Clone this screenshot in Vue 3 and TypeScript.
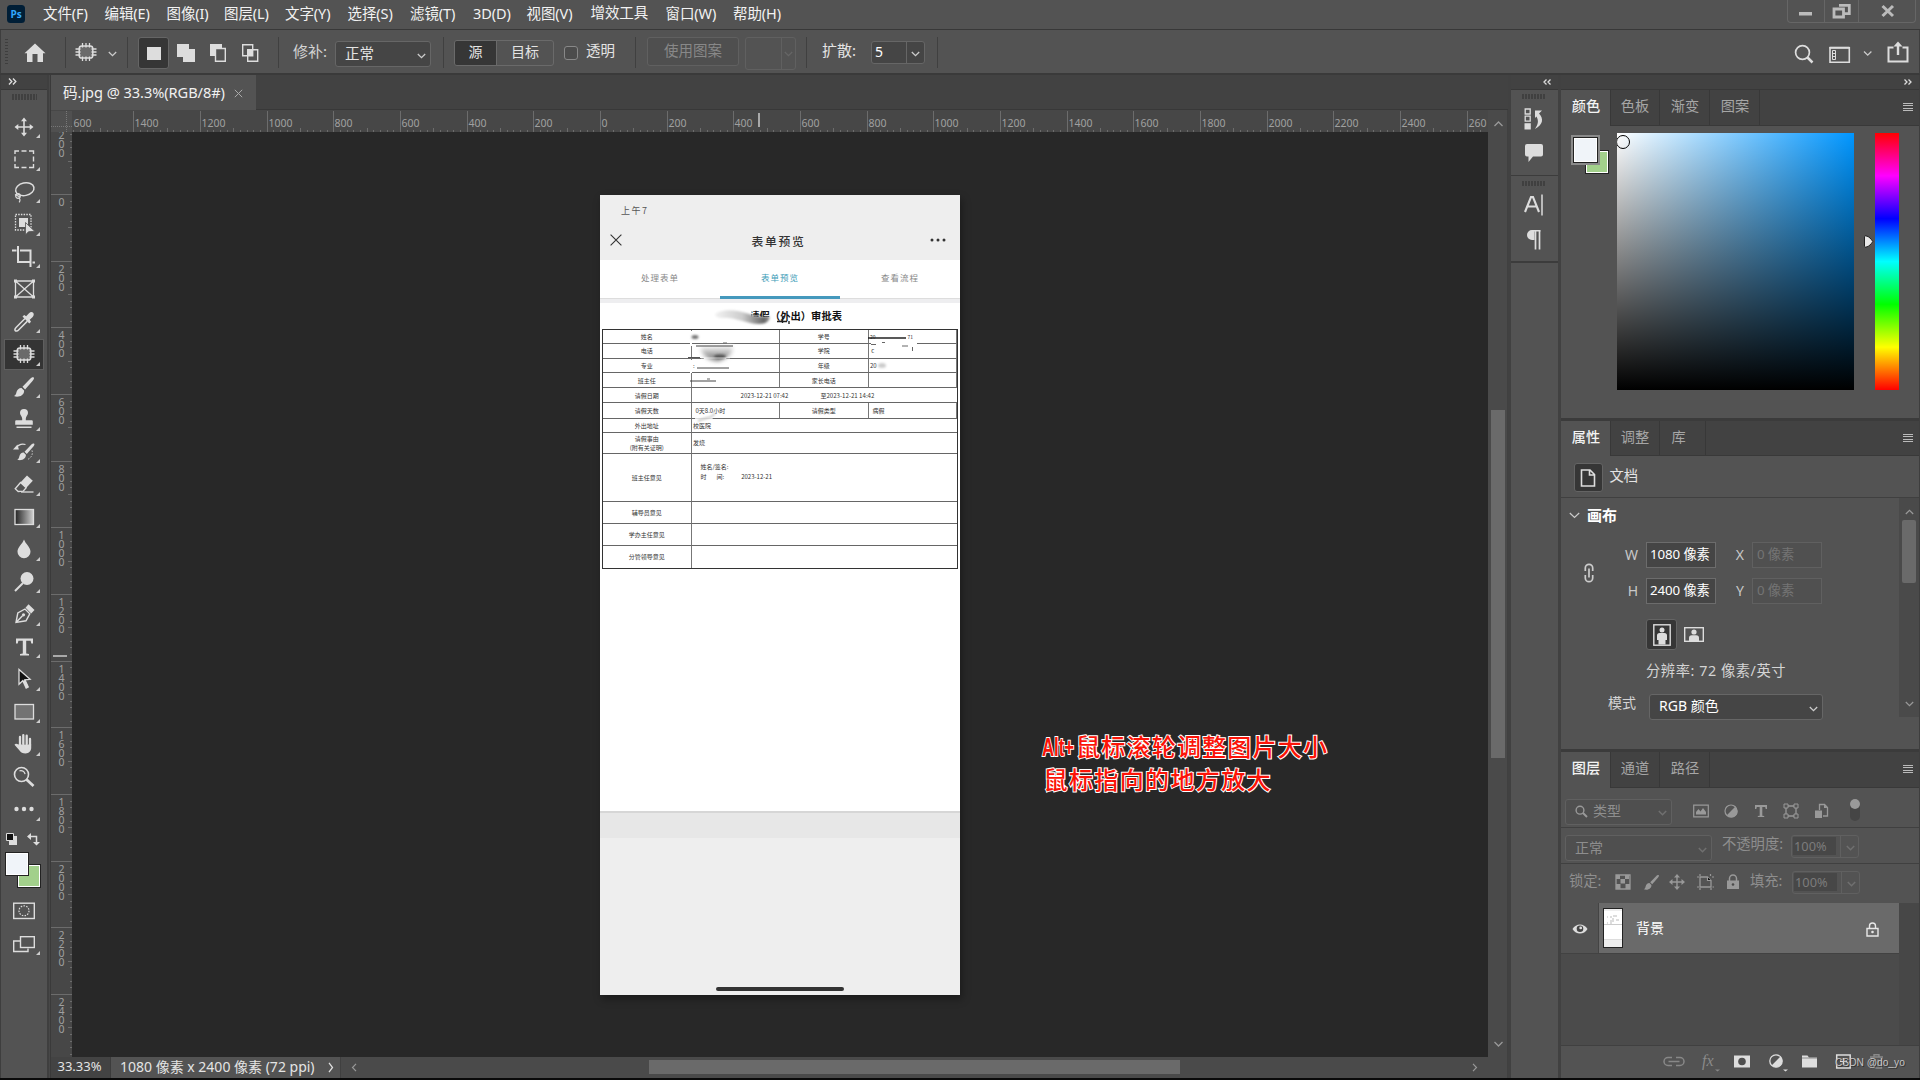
<script setup lang="ts">
interface MenuItem { t: string; w: number }
interface Tool { n: string; svg: string; more: boolean; on?: boolean }
interface Tick { p: number; len: number; label: string }

const menus: MenuItem[] = [
  { t: '文件(F)', w: 61.5 }, { t: '编辑(E)', w: 62 }, { t: '图像(I)', w: 57.5 }, { t: '图层(L)', w: 61 },
  { t: '文字(Y)', w: 62.5 }, { t: '选择(S)', w: 62.5 }, { t: '滤镜(T)', w: 63 }, { t: '3D(D)', w: 53.5 },
  { t: '视图(V)', w: 64 }, { t: '增效工具', w: 75 }, { t: '窗口(W)', w: 67.5 }, { t: '帮助(H)', w: 60 },
]

const patch =
  '<rect x="5.2" y="6" width="13.6" height="12" rx="2.6" fill="#6a6a6a" stroke="#ddd" stroke-width="1.5"/>' +
  '<path d="M8.5 3v4.5M12 3v4.5M15.5 3v4.5M8.5 16.5V21M12 16.5V21M15.5 16.5V21M1.5 9H6.5M1.5 12H6.5M1.5 15H6.5M17.5 9h5M17.5 12h5M17.5 15h5" stroke="#ddd" stroke-width="1.3"/>'
const brush =
  '<path d="M21.8 2.6c-1.2-.7-2.6.2-3.6 1.2L10.500 11.800l2.600 2.600L20.300 6.300c1-1.100 2.300-2.800 1.500-3.700z" fill="#ddd"/>' +
  '<path d="M9.500 12.900l2.600 2.600c.3 3-2.300 5.700-5.600 6.100-1.900.2-3.400-.1-4.500-.6 1.900-.7 2.100-2.100 2.500-3.900.6-2.600 2.700-4.400 5-4.200z" fill="#ddd"/>'

const tools: Tool[] = [
  { n: 'move', more: true, svg: '<path d="M12 4v16M4 12h16" stroke="#ddd" stroke-width="1.6"/><path d="M12 2.500l3 3.800H9zM12 21.500l3-3.800H9zM2.500 12l3.800-3v6zM21.500 12l-3.800-3v6z" fill="#ddd"/>' },
  { n: 'marquee', more: true, svg: '<path d="M3 7V4h4M9.500 4h5M17 4h4.500v3M21.500 9.500v5M21.500 17v3.500H17M14.500 20.500h-5M7 20.500H3V17M3 14.500v-5" fill="none" stroke="#ddd" stroke-width="1.4"/>' },
  { n: 'lasso', more: true, svg: '<ellipse cx="12.800" cy="9.200" rx="9.300" ry="6.300" transform="rotate(-12 12.800 9.200)" fill="none" stroke="#ddd" stroke-width="1.500"/><circle cx="6" cy="16" r="2.300" fill="none" stroke="#ddd" stroke-width="1.200"/><path d="M3 14.500l5 2.500M6.500 18c2 .8 1.800 2.700.6 4.300" fill="none" stroke="#ddd" stroke-width="1.200"/>' },
  { n: 'object', more: true, svg: '<rect x="3.500" y="2.500" width="15.500" height="15.500" fill="none" stroke="#ddd" stroke-width="1.300" stroke-dasharray="1.500 1.200"/><rect x="7" y="6" width="9" height="9" fill="#ddd"/><path d="M13.500 10.500v12.300l3-3.100 6.200-.4z" fill="#ddd" stroke="#535353" stroke-width=".8"/>' },
  { n: 'crop', more: true, svg: '<path d="M6 1v16h13.500M0 5.500h4.500M8 5.500h10.500V22M20.500 17.500H23" fill="none" stroke="#ddd" stroke-width="2"/>' },
  { n: 'frame', more: false, svg: '<path d="M3.500 4h18v16h-18zM3.500 4l18 16M21.500 4l-18 16" fill="none" stroke="#ddd" stroke-width="1.300"/><path d="M2 2.500h3v3H2zM20 2.500h3v3h-3zM2 18.500h3v3H2zM20 18.500h3v3h-3z" fill="#ddd"/>' },
  { n: 'eyedropper', more: true, svg: '<path d="M13 8.500L4.300 17.200c-1.300 1.300-1.700 2.700-1 3.500s2.300.3 3.500-1l8.600-8.600" fill="none" stroke="#ddd" stroke-width="1.500"/><path d="M10.500 6.600l1.700-1.700 1.900 1.300 2.900-3c1.500-1.400 3.200-1.400 4.100-.4s1 2.600-.4 4.100l-3 2.900 1.300 1.900-1.700 1.700z" fill="#ddd"/>' },
  { n: 'patch', more: true, on: true, svg: patch },
  { n: 'brush', more: true, svg: brush },
  { n: 'stamp', more: true, svg: '<path d="M12 2a4 4 0 0 1 4 4c0 2.500-2.200 3.200-2.200 5.800v1.400h5.700c.8 0 1.300.5 1.300 1.300v3.200H3.200v-3.200c0-.8.5-1.300 1.300-1.300h5.700v-1.400C10.200 9.200 8 8.500 8 6a4 4 0 0 1 4-4zM4.500 19.500h15v1.600h-15z" fill="#ddd"/>' },
  { n: 'history', more: true, svg: '<g transform="translate(3.500 1.500) scale(.86)">' + brush + '</g><path d="M4 8c2.500-3.500 6-4.500 9.500-3.500" fill="none" stroke="#ddd" stroke-width="1.300"/><path d="M1 9.500l4.500-5 1.300 5z" fill="#ddd"/><path d="M20 10.500c1 3 0 7-4.500 9" fill="none" stroke="#ddd" stroke-dasharray="1.300 1.700"/>' },
  { n: 'eraser', more: true, svg: '<path d="M15 3.500l5.800 5.300-6.500 7-5.900-5.400z" fill="#ddd"/><path d="M8.500 10.500l5.700 5.200-3 3.500-5 .3-3-2.700z" fill="none" stroke="#ddd" stroke-width="1.300"/><path d="M9 20h12.500" stroke="#ddd" stroke-width="1.300"/>' },
  { n: 'gradient', more: true, svg: '<defs><linearGradient id="tg"><stop offset="0" stop-color="#222"/><stop offset="1" stop-color="#d0d0d0"/></linearGradient></defs><rect x="3" y="4.500" width="18.500" height="15" fill="url(#tg)" stroke="#ddd" stroke-width="1.300"/>' },
  { n: 'blur', more: true, svg: '<path d="M12 2.500c1.500 4.500 6.500 7.500 6.500 12.200a6.500 6.500 0 0 1-13 0C5.500 10 10.500 7 12 2.500z" fill="#ddd"/>' },
  { n: 'dodge', more: true, svg: '<circle cx="15" cy="8.500" r="6.500" fill="#ddd"/><path d="M11 13l-8 8" stroke="#ddd" stroke-width="2"/>' },
  { n: 'pen', more: true, svg: '<path d="M4 20.500l1.800-9.500 7.200-4 4.800 4.800-3.800 7z M4 20.500l6.500-6.700" fill="none" stroke="#ddd" stroke-width="1.400"/><circle cx="11.500" cy="12.800" r="1.600" fill="#ddd"/><path d="M13.500 5.800l3-3.500 6 5.600-3.300 3.600z" fill="#ddd"/>' },
  { n: 'type', more: true, svg: '<path d="M4 3.500h17v5h-1.700l-.7-2.700h-4.400v12.700l2.800.5v1.500H8v-1.500l2.800-.5V5.800H6.400l-.7 2.700H4z" fill="#ddd"/>' },
  { n: 'select', more: true, svg: '<path d="M7 2.500v14.800l3.800-3.600 3.400 7.300 2-1-3.300-7.200 5.200-.5z" fill="#111" stroke="#ddd" stroke-width="1.300"/><path d="M10.800 14l3.300 7 2.300-1.100L13 12.800z" fill="#ddd"/>' },
  { n: 'rect', more: true, svg: '<rect x="3" y="4.500" width="18.500" height="14.500" fill="#737373" stroke="#ddd" stroke-width="1.300"/>' },
  { n: 'hand', more: true, svg: '<path d="M8 13V5M11.300 12V3.200M14.700 12V3.700M18 13V7" stroke="#ddd" stroke-width="2.300" stroke-linecap="round"/><path d="M6.900 12.500h12.300v3.300c0 3.300-2.300 5.700-5.600 5.700-3 0-4.700-1-6.300-3.300l-4.800-5.500c.7-1.400 2.500-1.300 3.400-.4z" fill="#ddd"/>' },
  { n: 'zoom', more: false, svg: '<circle cx="9.500" cy="9.500" r="7" fill="none" stroke="#ddd" stroke-width="1.600"/><path d="M7.500 5.800c3-.8 5 .8 5.600 3.400" fill="none" stroke="#ddd" stroke-width="1.200"/><path d="M14.500 14.500l7 6.500" stroke="#ddd" stroke-width="2.800"/>' },
  { n: 'more', more: true, svg: '<circle cx="4.500" cy="12" r="2.200" fill="#ddd"/><circle cx="12" cy="12" r="2.200" fill="#ddd"/><circle cx="19.500" cy="12" r="2.200" fill="#ddd"/>' },
]

const buildTicks = (origin: number, from: number, to: number): Tick[] => {
  const out: Tick[] = []
  for (let u = from; u <= to; u += 20) {
    const p = Math.round(origin + u / 3) + 0.5
    const major = u % 200 === 0
    out.push({ p, len: major ? 21 : u % 100 === 0 ? 4 : 2, label: major ? String(Math.abs(u)) : '' })
  }
  return out
}
// The outermost labels run past the ruler's ends, so only their visible digits are kept.
const hTicks = buildTicks(528, -1580, 2640).map((t) => (t.label === '2600' ? { ...t, label: '260' } : t))
const vTicks = buildTicks(62, -200, 2580)

const lockIcons: string[] = [
  '<path d="M1 1h14v14H1z" fill="none" stroke="#999" stroke-width="1.300"/><path d="M1 1h4v4H1zM10 1h4v4h-4zM5.500 5h4.500v4.500H5.500zM1 10h4.500v5H1zM10.500 10H15v5h-4.500z" fill="#999"/>',
  '<g transform="scale(.76) translate(-1 -1)">' + brush.replace(/#ddd/g, '#999') + '</g>',
  '<path d="M8 2v12M2 8h12" stroke="#999" stroke-width="1.400"/><path d="M8 0l3 3.500H5zM8 16l3-3.500H5zM0 8l3.500-3v6zM16 8l-3.500-3v6z" fill="#999"/>',
  '<path d="M3 3h7.500L14 6.500V13H3z" fill="none" stroke="#999" stroke-width="1.300"/><path d="M0 3h2M3 0v2M13.500 0v2M15 3h2M0 13h2M3 14v2M14 14v2M15.500 13H17M10.500 3v3.500H14" stroke="#999" stroke-width="1.200"/>',
  '<path d="M2 6.500h12V15H2z" fill="#999"/><path d="M4.500 7V4.500a3.500 3.500 0 0 1 7 0V7" fill="none" stroke="#999" stroke-width="1.500"/><circle cx="8" cy="10.500" r="1.300" fill="#4a4a4a"/>',
]
const filterIcons: string[] = [
  '<path d="M.7 2.200h14.600v11.600H.7z" fill="none" stroke="#999" stroke-width="1.200"/><path d="M3 11.500V9l2.500-3 2 2.500L10 5l3 4v2.500z" fill="#999"/>',
  '<circle cx="8" cy="8" r="6" fill="none" stroke="#999" stroke-width="1.200"/><path d="M12.200 3.800A6 6 0 1 1 3.800 12.200z" fill="#999"/>',
  '<path d="M2 2h12v4h-1.300l-.5-2H9.300v8.800l1.900.3V14H4.800v-.9l1.900-.3V4H3.800l-.5 2H2z" fill="#999"/>',
  '<path d="M3 3h10v10H3z" fill="none" stroke="#999" stroke-width="1.300"/><path d="M1 1h4v4H1zM11 1h4v4h-4zM1 11h4v4H1zM11 11h4v4h-4z" fill="#555" stroke="#999"/>',
  '<path d="M6.500 7V1.500h5l3 3V13H10" fill="none" stroke="#999" stroke-width="1.300"/><path d="M11 1.500v3.500h3.500M2 7.500h7V15H2z" fill="#999"/>',
]
</script>

<template>
  <div class="app">
    <header class="menubar">
      <svg class="ps" width="18" height="18" viewBox="0 0 18 18"><rect width="18" height="18" rx="3.500" fill="#001e36" /><text x="9" y="12.800" text-anchor="middle" font-size="10" font-weight="700" fill="#31a8ff" font-family="Open Sans, sans-serif">Ps</text></svg>
      <span v-for="m in menus" :key="m.t" class="menu" :class="{ up: m.t === '增效工具' }" :style="{ width: m.w + 'px' }">{{ m.t }}</span>
      <div class="winctl">
        <span class="w1"><svg width="36" height="22"><path d="M11 12h13v3.500H11z" fill="#bbb" /></svg></span>
        <span class="w2"><svg width="33" height="22"><path d="M14 5.300h10.300v8.400h-6M9 9h9.500v8H9z" fill="none" stroke="#bbb" stroke-width="2.800" /></svg></span>
        <span class="w3"><svg width="58" height="22"><path d="M23.500 6L34 16M34 6L23.500 16" stroke="#bbb" stroke-width="3" /></svg></span>
      </div>
    </header>

    <section class="options">
      <i class="ogrip"></i>
      <svg class="home" width="22" height="20" viewBox="0 0 22 20"><path d="M11 .5l10.500 9.800H19V19h-5.500v-8h-5v8H3v-8.700H.5z" fill="#ddd" /></svg>
      <i class="osep s1"></i>
      <svg class="opatch" width="24" height="24" viewBox="0 0 24 24" v-html="patch"></svg>
      <svg class="chev c1" width="9" height="6" viewBox="0 0 9 6"><path d="M.8 1l3.700 3.700L8.200 1" /></svg>
      <i class="osep s2"></i>
      <span class="newsel"><i></i></span>
      <svg class="op1" width="84" height="20" viewBox="0 0 84 20">
        <path d="M1 1h12v5h6v13H7v-5H1z" fill="#ddd" />
        <path d="M34 1h12v4h-7v8h-5z" fill="#ddd" /><path d="M39.500 5.500h9.800v12.800h-9.800z" fill="none" stroke="#ddd" stroke-width="1.400" />
        <path d="M66.700 1.700h10v11h-10zM71.700 6.700h10v11.600h-10z" fill="none" stroke="#ddd" stroke-width="1.400" /><path d="M71.500 6.500h5.500v6.500h-5.500z" fill="#ddd" />
      </svg>
      <i class="osep s3"></i>
      <span class="otext t1">修补:</span>
      <span class="osel">正常<svg class="chev" width="9" height="6" viewBox="0 0 9 6"><path d="M.8 1l3.700 3.700L8.200 1" /></svg></span>
      <i class="osep s4"></i>
      <span class="seg"><b>源</b><b>目标</b></span>
      <i class="check"></i>
      <span class="otext t2">透明</span>
      <i class="osep s5"></i>
      <span class="obtn">使用图案</span>
      <span class="opat"><i></i><svg class="chev dim" width="9" height="6" viewBox="0 0 9 6"><path d="M.8 1l3.700 3.700L8.200 1" /></svg></span>
      <i class="osep s6"></i>
      <span class="otext t3">扩散:</span>
      <span class="onum"><b>5</b><i><svg class="chev" width="9" height="6" viewBox="0 0 9 6"><path d="M.8 1l3.700 3.700L8.200 1" /></svg></i></span>
      <i class="osep s7"></i>
      <svg class="oright" width="110" height="26" viewBox="0 0 110 26">
        <circle cx="8.500" cy="11.500" r="6.900" fill="none" stroke="#ddd" stroke-width="1.700" /><path d="M13.500 16.500l5 5" stroke="#ddd" stroke-width="2.500" />
        <path d="M36 6.700h19.300v14.500H36z" fill="none" stroke="#ddd" stroke-width="1.600" /><path d="M35.500 5.700h20v2h-20z" fill="#ddd" /><path d="M38.500 9.500h3v9h-3zM38.500 12.500h3M38.500 15.500h3" fill="none" stroke="#ddd" />
        <path d="M70 10.500l3.700 3.700 3.700-3.700" fill="none" stroke="#ccc" stroke-width="1.300" />
      </svg>
      <svg class="share" width="22" height="22" viewBox="0 0 22 22"><path d="M6.500 6.500h-5v14h19v-14h-5" fill="none" stroke="#ddd" stroke-width="2" /><path d="M11 14V4" stroke="#ddd" stroke-width="2.400" /><path d="M11 .5l4.500 5h-9z" fill="#ddd" /></svg>
    </section>

    <main class="main">
      <aside class="toolbar">
        <div class="thead"><svg width="9" height="7" viewBox="0 0 9 7"><path d="M1 .5l2.800 3L1 6.500M5 .5l2.800 3L5 6.500" fill="none" stroke="#ddd" stroke-width="1.400" /></svg></div>
        <i class="grip"></i>
        <div class="tools">
          <div v-for="t in tools" :key="t.n" class="tool">
            <span :class="{ on: t.on }">
              <svg width="24" height="24" viewBox="0 0 24 24" v-html="t.svg"></svg>
              <i v-if="t.more"></i>
            </span>
          </div>
        </div>
        <svg class="mini" width="46" height="14" viewBox="0 0 46 14">
          <path d="M8 4h8v9H8z" fill="#ddd" /><path d="M5.500 1.500h7v7h-7z" fill="#111" stroke="#ddd" />
          <path d="M28 4.500h7.500V11" fill="none" stroke="#ddd" stroke-width="1.500" /><path d="M26 4.500L30 1v7zM35.500 13.500L32 10h7z" fill="#ddd" />
        </svg>
        <div class="swatches"><i class="bg"></i><i class="fg"></i></div>
        <svg class="qm" width="24" height="18" viewBox="0 0 24 18"><rect x="1.700" y="1.200" width="20.600" height="15.300" fill="none" stroke="#ddd" stroke-width="1.400" /><circle cx="12" cy="8.800" r="5" fill="none" stroke="#ddd" stroke-width="1.200" stroke-dasharray="1.500 1.300" /></svg>
        <svg class="sm" width="30" height="20" viewBox="0 0 30 20"><path d="M16 13.500v3H1.700V6H8" fill="none" stroke="#ddd" stroke-width="1.400" /><rect x="8.500" y="1.700" width="13.800" height="10.800" fill="none" stroke="#ddd" stroke-width="1.400" /><path d="M28 16v4h-4z" fill="#ccc" /></svg>
      </aside>

      <section class="center">
        <div class="tabbar"><div class="doctab">码.jpg @ 33.3%(RGB/8#)<svg width="9" height="9" viewBox="0 0 9 9"><path d="M.8.8l7.400 7.400M8.200.8L.8 8.200" stroke="#aaa" fill="none" /></svg></div></div>
        <div class="work">
          <div class="rulers">
            <div class="hrow">
              <svg class="corner" width="21" height="21"><path d="M15.500 0v21M0 15.500h21" stroke="#777" stroke-dasharray="1 1" /></svg>
              <svg width="1416" height="21">
                <text x="1.500" y="16" class="rl">600</text>
                <g v-for="t in hTicks" :key="t.p"><path :d="`M${t.p} 21v-${t.len}`" stroke="#6c6c6c" /><text v-if="t.label" :x="t.p + 1" y="16" class="rl">{{ t.label }}</text></g>
                <path d="M687 2v14" stroke="#bbb" stroke-width="1.700" />
              </svg>
            </div>
            <div class="crow">
              <svg width="21" height="925">
                <g v-for="t in vTicks" :key="t.p"><path :d="`M21 ${t.p}h-${t.len}`" stroke="#6c6c6c" /><text v-for="(c, i) in t.label.split('')" :key="i" x="10.600" :y="t.p + 11.200 + i * 9" text-anchor="middle" class="rl">{{ c }}</text></g>
                <path d="M2 524h14" stroke="#bbb" stroke-width="1.700" />
              </svg>
              <div class="canvas">
                <article class="doc">
                  <div class="dstatus">上午7</div>
                  <div class="dnav">
                    <svg width="12" height="12" viewBox="0 0 12 12"><path d="M.6.6l10.800 10.800M11.400.6L.6 11.400" stroke="#333" stroke-width="1.100" /></svg>
                    <b>表单预览</b>
                    <svg width="16" height="4" viewBox="0 0 16 4"><circle cx="2" cy="2" r="1.500" fill="#333" /><circle cx="8" cy="2" r="1.500" fill="#333" /><circle cx="14" cy="2" r="1.500" fill="#333" /></svg>
                  </div>
                  <div class="dtabs"><span>处理表单</span><span class="act">表单预览</span><span>查看流程</span></div>
                  <div class="dgap"></div>
                  <div class="dbody">
                    <h4>请假（外出）审批表</h4>
                    <div class="form">
                      <span>姓名</span><span></span><span>学号</span><span class="l tiny"><em>20</em><em>71</em></span>
                      <span>电话</span><span></span><span>学院</span><span class="l">&nbsp;c</span>
                      <span>专业</span><span class="l">:</span><span>年级</span><span class="l">20</span>
                      <span>班主任</span><span></span><span>家长电话</span><span></span>
                      <span>请假日期</span><span class="x3 dates"><em>2023-12-21 07:42</em><em>至2023-12-21 14:42</em></span>
                      <span>请假天数</span><span class="l p4">0天8.0小时</span><span>请假类型</span><span class="l p4">病假</span>
                      <span>外出地址</span><span class="x3 l">校医院</span>
                      <span class="two">请假事由<br />(附有关证明)</span><span class="x3 l">发烧</span>
                      <span>班主任意见</span><span class="x3 sign"><em>姓名/签名:</em><em>时<s></s>间:<u></u>2023-12-21</em></span>
                      <span>辅导员意见</span><span class="x3"></span>
                      <span>学办主任意见</span><span class="x3"></span>
                      <span>分管领导意见</span><span class="x3"></span>
                    </div>
                  </div>
                  <div class="dfoot"></div>
                  <i class="homebar"></i>
                  <svg class="smudge" width="360" height="250" viewBox="0 0 360 250">
                    <defs>
                      <filter id="b1" x="-50%" y="-50%" width="200%" height="200%"><feGaussianBlur stdDeviation="1.200" /></filter>
                      <filter id="b2" x="-50%" y="-50%" width="200%" height="200%"><feGaussianBlur stdDeviation="2.200" /></filter>
                      <linearGradient id="sg"><stop offset="0" stop-color="#f2f2f2" /><stop offset=".5" stop-color="#ccc" /><stop offset=".9" stop-color="#666" /><stop offset="1" stop-color="#999" /></linearGradient>
                      <linearGradient id="sv" x2="0" y2="1"><stop offset="0" stop-color="#fff" /><stop offset="1" stop-color="#666" /></linearGradient>
                    </defs>
                    <path d="M147 122h24v7h-24z" fill="#fff" />
                    <path d="M147 114h5l-1 8h-4z" fill="#fff" />
                    <path d="M115 119c8-6 22-4 34 0 8 3 14 3 20 2 2 4-2 8-10 8-12 0-22-6-32-6-7 0-12 0-12-4z" fill="url(#sg)" filter="url(#b1)" />
                    <path d="M177 126.500h10M182.500 122v6M189 126v3" stroke="#222" stroke-width="1.400" />
                    <path d="M91 136v15M91 165v13" stroke="#fff" stroke-width="2" />
                    <ellipse cx="95" cy="142" rx="3.500" ry="2" fill="#777" filter="url(#b1)" />
                    <path d="M98 150h26c6 0 8 8 3 12l-5 10H106c2-8-8-12-8-22z" fill="#fff" />
                    <path d="M100 153l32-3c3 8-5 13-13 16-10 0-16-5-19-13z" fill="url(#sv)" filter="url(#b2)" />
                    <ellipse cx="120" cy="161.500" rx="6" ry="2" fill="#555" filter="url(#b1)" />
                    <path d="M96 151h37M97 173h32M90 186h26" stroke="#444" /><path d="M123 148h4M107 184h3" stroke="#666" />
                    <path d="M88 162.500h12" stroke="#555" /><path d="M101 163h29" stroke="#fff" stroke-width="1" opacity=".6" />
                    <path d="M268 143h38" stroke="#222" stroke-width="1.500" />
                    <path d="M271 148.500h46" stroke="#fff" stroke-width="1.600" /><path d="M282 147.500h3M271 149.500h5M302 151h6M312.500 152v4" stroke="#666" />
                    <ellipse cx="282" cy="170.500" rx="4" ry="2.500" fill="#ccc" filter="url(#b1)" />
                    <path d="M95 222h18l-1 4.500H95z" fill="#fff" opacity=".8" /><path d="M98 226c8-4 14-2 17-8" fill="none" stroke="#bbb" stroke-width="1.500" filter="url(#b1)" />
                  </svg>
                </article>
                <svg class="note" width="300" height="70" viewBox="0 0 300 70">
                  <text x="0" y="34" textLength="32" lengthAdjust="spacingAndGlyphs" class="alt">Alt+</text>
                  <text x="34" y="34" textLength="251" class="red">鼠标滚轮调整图片大小</text>
                  <text x="1.500" y="67" textLength="227" class="red">鼠标指向的地方放大</text>
                </svg>
              </div>
            </div>
          </div>
          <div class="vscroll">
            <svg width="20" height="26"><path d="M6.500 16l4-4 4 4" fill="none" stroke="#999" stroke-width="1.300" /></svg>
            <i></i>
            <svg width="20" height="26"><path d="M6.500 12l4 4 4-4" fill="none" stroke="#999" stroke-width="1.300" /></svg>
          </div>
        </div>
        <footer class="status">
          <span class="zoomv">33.33%</span>
          <span class="dims"><em>1080 像素 x 2400 像素 (72 ppi)</em><svg width="6" height="11" viewBox="0 0 6 11"><path d="M1 .8l3.500 4.700L1 10.200" fill="none" stroke="#ddd" stroke-width="1.300" /></svg></span>
          <span class="hscroll"><svg width="6" height="9" viewBox="0 0 6 9"><path d="M5 .8L1.500 4.500 5 8.200" fill="none" stroke="#999" stroke-width="1.200" /></svg><i></i><svg width="6" height="9" viewBox="0 0 6 9"><path d="M1 .8l3.500 3.700L1 8.200" fill="none" stroke="#999" stroke-width="1.200" /></svg></span>
        </footer>
      </section>

      <aside class="strip">
        <div class="shead"><svg width="8" height="6" viewBox="0 0 8 6"><path d="M3.500.5L1 3l2.500 2.500M7.500.5L5 3l2.500 2.500" fill="none" stroke="#ddd" stroke-width="1.300" /></svg></div>
        <div class="sbox b1">
          <i class="grip"></i>
          <svg width="20" height="22" viewBox="0 0 20 22"><path d="M1.200 1h5v5h-5zM1.200 8.200h5v5h-5z" fill="none" stroke="#ddd" stroke-width="1.300" /><path d="M.5 15.200h6.300v6.300H.5z" fill="#ddd" /><path d="M11 2.500h7l-3 3c5 5.500 4 11-4 15.500 3-4.500 4-8 1.500-12.500L11 10z" fill="#ddd" /></svg>
          <svg width="20" height="20" viewBox="0 0 20 20"><path d="M3 1h14q2 0 2 2v8.500q0 2-2 2H9L4.500 19v-5.500H3q-2 0-2-2V3q0-2 2-2z" fill="#ddd" /></svg>
        </div>
        <div class="sbox b2">
          <i class="grip"></i>
          <svg width="20" height="22" viewBox="0 0 20 22"><path d="M1 18L7 3h2l6 15M3.500 12.500h9" fill="none" stroke="#ddd" stroke-width="2.100" /><path d="M18 .5v21" stroke="#ddd" stroke-width="1.500" /></svg>
          <svg width="20" height="22" viewBox="0 0 20 22"><path d="M9.500 1.500v9.500H7A5 5 0 0 1 7 1h8.500v1.500H9.500z" fill="#ddd" /><path d="M10.500 1.500v19M14.500 1.500v19" stroke="#ddd" stroke-width="1.700" /></svg>
        </div>
      </aside>

      <aside class="panels">
        <div class="phead"><svg width="8" height="6" viewBox="0 0 8 6"><path d="M.5.5L3 3 .5 5.500M4.500.5L7 3 4.500 5.500" fill="none" stroke="#ddd" stroke-width="1.300" /></svg></div>

        <section class="panel pcolor">
          <nav class="ptabs"><b class="on">颜色</b><b>色板</b><b class="w49">渐变</b><b class="w49">图案</b><i class="burger"></i></nav>
          <div class="cbody">
            <div class="csw"><i class="bg"></i><i class="fg"></i></div>
            <div class="field"><i></i></div>
            <svg width="11" height="13" viewBox="0 0 11 13"><path d="M1.500 1.800c0-.8.600-1 1.500-.9 3 .3 5.500 3.500 6.800 5.600C8.500 8.600 6 11.800 3 12.100c-.9.100-1.500-.1-1.500-.9z" fill="#e8e8e8" stroke="#222" stroke-width="1" /></svg>
            <div class="hue"></div>
          </div>
        </section>

        <section class="panel pprops">
          <nav class="ptabs"><b class="on">属性</b><b>调整</b><b class="w45">库</b><i class="burger"></i></nav>
          <div class="docrow"><span><svg width="16" height="18" viewBox="0 0 16 18"><path d="M1.500 1h8.500l4.500 4.500V17h-13zM9.500 1v5h5" fill="none" stroke="#ddd" stroke-width="1.600" /></svg></span>文档</div>
          <div class="pbody">
            <div class="pcontent">
              <div class="sec"><svg width="11" height="7" viewBox="0 0 11 7"><path d="M.8 1l4.700 4.500L10.200 1" fill="none" stroke="#ccc" stroke-width="1.200" /></svg><b>画布</b></div>
              <div class="sizes">
                <svg width="12" height="20" viewBox="0 0 12 20"><path d="M2.300 8V5a3.700 3.700 0 0 1 7.400 0v3M2.300 12v3a3.700 3.700 0 0 0 7.400 0v-3M6 5.500v9" fill="none" stroke="#ccc" stroke-width="1.700" /></svg>
                <div class="grid">
                  <label>W</label><span class="inp">1080 像素</span><label>X</label><span class="inp off">0 像素</span>
                  <label>H</label><span class="inp">2400 像素</span><label>Y</label><span class="inp off">0 像素</span>
                </div>
              </div>
              <div class="orient">
                <span><svg width="18" height="22" viewBox="0 0 18 22"><rect x=".8" y=".8" width="16.400" height="20.400" fill="none" stroke="#ddd" stroke-width="1.400" /><circle cx="9" cy="6" r="2.500" fill="#ddd" /><path d="M4 16v-4.500q0-2.500 2.500-2.500h5q2.500 0 2.500 2.500V16h-1.500v4.500h-7V16z" fill="#ddd" /></svg></span>
                <svg width="20" height="15" viewBox="0 0 20 15"><rect x=".7" y=".7" width="18.600" height="13.600" fill="none" stroke="#ddd" stroke-width="1.400" /><circle cx="10" cy="5" r="2.600" fill="#ddd" /><path d="M5 14v-3q0-2.800 2.800-2.800h4.400Q15 8.200 15 11v3z" fill="#ddd" /></svg>
              </div>
              <div class="res">分辨率: 72 像素/英寸</div>
              <div class="mode"><span>模式</span><span class="msel">RGB 颜色<svg class="chev" width="9" height="6" viewBox="0 0 9 6"><path d="M.8 1l3.700 3.700L8.200 1" /></svg></span></div>
            </div>
            <div class="pscroll">
              <svg width="9" height="6" viewBox="0 0 9 6"><path d="M.8 5l3.700-3.700L8.200 5" fill="none" stroke="#999" stroke-width="1.200" /></svg><i></i>
              <svg width="9" height="6" viewBox="0 0 9 6"><path d="M.8 1l3.700 3.700L8.200 1" fill="none" stroke="#999" stroke-width="1.200" /></svg>
            </div>
          </div>
        </section>

        <section class="panel players">
          <nav class="ptabs"><b class="on">图层</b><b>通道</b><b class="w49">路径</b><i class="burger"></i></nav>
          <div class="lrow r1">
            <span class="lsel k"><svg width="13" height="13" viewBox="0 0 13 13"><circle cx="5" cy="5.200" r="3.900" fill="none" stroke="#999" stroke-width="1.400" /><path d="M8 8l4 4" stroke="#999" stroke-width="2" /></svg>类型<svg class="chev dim2" width="9" height="6" viewBox="0 0 9 6"><path d="M.8 1l3.700 3.700L8.200 1" /></svg></span>
            <svg v-for="(f, i) in filterIcons" :key="i" class="fi" width="16" height="16" viewBox="0 0 16 16" v-html="f"></svg>
            <span class="toggle"><i></i></span>
          </div>
          <div class="lrow r2">
            <span class="lsel m">正常<svg class="chev dim2" width="9" height="6" viewBox="0 0 9 6"><path d="M.8 1l3.700 3.700L8.200 1" /></svg></span>
            <span class="lt o">不透明度:</span>
            <span class="pct"><b>100%</b><i><svg class="chev dim2" width="9" height="6" viewBox="0 0 9 6"><path d="M.8 1l3.700 3.700L8.200 1" /></svg></i></span>
          </div>
          <div class="lrow r3">
            <span class="lt l">锁定:</span>
            <svg v-for="(f, i) in lockIcons" :key="i" class="li" :class="'li' + i" width="17" height="16" viewBox="0 0 17 16" v-html="f"></svg>
            <span class="lt f">填充:</span>
            <span class="pct"><b>100%</b><i><svg class="chev dim2" width="9" height="6" viewBox="0 0 9 6"><path d="M.8 1l3.700 3.700L8.200 1" /></svg></i></span>
          </div>
          <div class="llist">
            <div class="lcol">
              <div class="layer">
                <span class="eye"><svg width="16" height="10" viewBox="0 0 16 10"><path d="M.5 5C4-1 12-1 15.500 5 12 11 4 11 .5 5z" fill="#ddd" /><circle cx="8" cy="4.700" r="3.300" fill="#444" /><circle cx="8.700" cy="3.900" r="1.400" fill="#ddd" /></svg></span>
                <div class="lname"><span class="thumb"><svg width="18" height="38"><path d="M0 0h18v38H0z" fill="#fff" /><path d="M0 0h18v2H0zM0 30h18v8H0z" fill="#eee" /><path d="M0 15.500h18" stroke="#ccc" /><path d="M3 8h1M6 8h2M9 7h4M12 11h3M6 12h2M3 14h1M6 14h2M9 9v4" stroke="#bbb" /><path d="M0 30.500h18" stroke="#ddd" /></svg></span><span class="lnm">背景</span><svg class="lk" width="13" height="15" viewBox="0 0 13 15"><path d="M1 6.500h11V14H1zM3.500 6.500V4a3 3 0 0 1 6 0v2.500" fill="none" stroke="#e8e8e8" stroke-width="1.400" /><circle cx="6.500" cy="10" r="1.300" fill="#e8e8e8" /></svg></div>
              </div>
            </div>
            <div class="lscroll"></div>
          </div>
          <div class="lfoot">
            <svg width="230" height="30" viewBox="0 0 230 30">
              <path d="M18 19.500h-4a4 4 0 0 1 0-8h4M22 11.500h4a4 4 0 0 1 0 8h-4M14.500 15.500h11" fill="none" stroke="#888" stroke-width="1.500" />
              <path d="M61 23.500h5l-2.500 2z" fill="#888" />
              <path d="M80 9.500h16v12H80z" fill="#ddd" /><circle cx="88" cy="15.500" r="3.800" fill="#4f4f4f" />
              <circle cx="122" cy="15" r="6.200" fill="none" stroke="#ddd" stroke-width="1.300" /><path d="M126.400 10.600a6.200 6.200 0 1 1-8.800 8.800z" fill="#ddd" /><path d="M129 23.500h5l-2.500 2z" fill="#ddd" />
              <path d="M148 9.500h5.500l1.500 2h8v10h-15z" fill="#ddd" /><path d="M148 12h15" stroke="#777" stroke-width=".8" />
              <path d="M182.700 9h13.500v13h-13.500zM189.500 12v6.500M186 15.200h7" fill="none" stroke="#ddd" stroke-width="1.500" />
              <path d="M216 11h13M220 10.500V8.700h5v1.800M217.500 12v10h10V12M221 13.500v6.500M224 13.500v6.500" fill="none" stroke="#8a8a8a" stroke-width="1.400" />
              <text x="48" y="20" font-size="16" font-style="italic" fill="#8a8a8a" font-family="Liberation Serif, serif">fx</text>
            </svg>
            <span class="wm">CSDN @do_yo</span>
          </div>
        </section>
      </aside>
    </main>
  </div>
</template>

<style>
body { background: #000; overflow: hidden; }
</style>

<style scoped>
* { box-sizing: border-box; }
i, em { font-style: normal; display: block; }
svg { display: block; flex: none; }
.app { width: 1920px; height: 1080px; background: #535353; display: flex; flex-direction: column; font-family: "Noto Sans", "Noto Sans CJK SC", sans-serif; font-size: 14px; color: #e4e4e4; border-bottom: 2px solid #0a0a0a; overflow: hidden; white-space: nowrap; }
.chev path { fill: none; stroke: #ccc; stroke-width: 1.3; }
.chev.dim path { stroke: #666; }
.chev.dim2 path { stroke: #707070; stroke-width: 1.5; }

.menubar { height: 30px; flex: none; display: flex; border-bottom: 1px solid #383838; padding-left: 7px; }
.ps { margin: 5px 18px 0 0; }
.menu { flex: none; line-height: 27px; font-size: 14.5px; color: #f2f2f2; letter-spacing: -0.1px; }
.menu.up { line-height: 25px; }
.winctl { margin-left: auto; margin-right: 4px; width: 129px; height: 23px; display: flex; border: 1px solid #666; border-top: 0; border-radius: 0 0 4px 4px; flex: none; overflow: hidden; }
.winctl span { border-right: 1px solid #666; }
.winctl .w3 { border: 0; }

.options { height: 45px; flex: none; display: flex; align-items: flex-start; border-bottom: 2px solid #3a3a3a; border-left: 1px solid #3e3e3e; border-right: 1px solid #3e3e3e; }
.ogrip { width: 3px; height: 26px; margin: 9px 0 0 4px; background: repeating-linear-gradient(#3e3e3e 0 1px, transparent 1px 3px); flex: none; }
.home { margin: 13px 0 0 16px; }
.osep { width: 1px; height: 31px; background: #404040; margin-top: 7px; flex: none; }
.s1 { margin-left: 19px; }
.opatch { margin: 9.5px 0 0 8px; }
.c1 { margin: 21px 0 0 10px; }
.s2 { margin-left: 10px; }
.newsel { width: 31px; height: 32px; margin: 7px 0 0 10px; background: #363636; border: 1px solid #656565; border-radius: 3px; flex: none; display: flex; align-items: center; justify-content: center; }
.newsel i { width: 14px; height: 13px; background: #ddd; }
.op1 { margin: 13px 0 0 7px; }
.s3 { margin-left: 18px; }
.otext { line-height: 22px; margin-top: 10px; flex: none; font-size: 15px; }
.t1 { margin-left: 14px; width: 42px; color: #d4d4d4; }
.osel { width: 96px; height: 26px; background: #454545; border: 1px solid #666; border-radius: 3px; margin-top: 11px; padding: 0 4px 3px 9px; display: flex; align-items: center; justify-content: space-between; line-height: 20px; flex: none; font-size: 14.5px; }
.osel .chev { margin-top: 7px; }
.s4 { margin-left: 12px; }
.seg { width: 100px; height: 26px; margin: 10px 0 0 10px; border: 1px solid #6a6a6a; border-radius: 3px; display: flex; flex: none; overflow: hidden; }
.seg b { font-weight: 400; text-align: center; line-height: 22px; flex: 1; }
.seg b:first-child { background: #363636; border-right: 1px solid #6a6a6a; flex: 0 0 42px; }
.check { width: 14px; height: 14px; border: 1px solid #888; border-radius: 3px; margin: 16px 0 0 10px; flex: none; background: #4c4c4c; }
.t2 { margin-left: 8px; width: 49px; font-size: 14.5px; margin-top: 9px; }
.obtn { width: 92px; height: 29px; margin: 7px 0 0 11px; border: 1px solid #606060; border-radius: 3px; color: #888; text-align: center; line-height: 24px; font-size: 14.5px; background: #4f4f4f; flex: none; }
.opat { width: 51px; height: 33px; margin: 7px 0 0 6px; border: 1px solid #606060; border-radius: 3px; display: flex; flex: none; align-items: center; }
.opat i { width: 36px; height: 31px; border-right: 1px solid #606060; margin-right: 2px; }
.s6 { margin-left: 10px; }
.t3 { margin-left: 15px; width: 49px; margin-top: 9px; }
.onum { width: 54px; height: 23px; margin-top: 11px; background: #454545; border: 1px solid #666; border-radius: 3px; display: flex; flex: none; }
.onum b { font-weight: 400; width: 34px; padding-left: 3px; line-height: 20px; color: #fff; }
.onum i { border-left: 1px solid #666; flex: 1; display: flex; align-items: center; justify-content: center; padding-top: 3px; }
.s7 { margin-left: 12px; }
.oright { margin: 11px 0 0 856px; width: 92px; }
.oright { overflow: hidden; }
.share { margin: 11px 0 0 1px; }
svg.oright { width: 110px; margin-right: -18px; }

.main { flex: 1; display: flex; min-height: 0; }
.toolbar { width: 51px; flex: none; border-left: 1px solid #3e3e3e; border-right: 1px solid #3a3a3a; background: linear-gradient(90deg, #535353 46px, #3f3f3f 46px 48px, #484848 48px); }
.thead { height: 15px; background: #424242; border-bottom: 1px solid #383838; padding: 3px 0 0 7px; width: 46px; }
.grip { height: 6px; background: repeating-linear-gradient(90deg, #404040 0 2px, transparent 2px 3px); }
.toolbar .grip { margin: 4px 0 0 11px; width: 25px; }
.tools { margin-top: 10.750px; width: 46px; }
.tool { height: 32.500px; padding: 1px 0 0 3px; }
.tool span { display: block; width: 40px; height: 30.500px; padding: 3px 0 0 8px; position: relative; }
.tool span.on { background: #343434; border: 1px solid #5f5f5f; padding: 2px 0 0 7px; }
.tool i { position: absolute; right: 4px; bottom: 4px; border: 2px solid; border-color: transparent #ccc #ccc transparent; }
.tool .on i { right: 3px; bottom: 3px; }
.mini { margin-top: 6px; }
.swatches { position: relative; height: 37px; margin-top: 6.5px; }
.swatches i, .csw i { position: absolute; border: 1px solid #222; box-shadow: inset 0 0 0 1px #fff; }
.fg { background: #f0f4f9; }
.bg { background: #a2d08b; }
.swatches i { width: 24px; height: 24px; }
.swatches .fg { left: 4px; top: 0; }
.swatches .bg { left: 16px; top: 12px; }
.qm { margin: 13px 0 0 11px; }
.sm { margin: 15px 0 0 11px; }

.center { width: 1457px; flex: none; display: flex; flex-direction: column; }
.tabbar { height: 35px; flex: none; background: #424242; border-bottom: 1px solid #383838; display: flex; }
.doctab { width: 205px; background: #535353; padding-left: 12px; line-height: 33px; font-size: 14.6px; display: flex; align-items: center; letter-spacing: -0.06px; color: #f0f0f0; height: 35px; padding-bottom: 1px; }
.doctab svg { margin: 2px 0 0 9px; }
.work { display: flex; height: 947px; }
.rulers { width: 1437px; background: #474747; display: flex; flex-direction: column; }
.hrow, .crow { display: flex; }
.hrow { height: 22px; padding-top: 1px; }
.corner { background: #505050; }
.rl { font: 10.5px "Noto Sans", sans-serif; fill: #a0a0a0; }
.canvas { width: 1416px; height: 925px; background: #282828; position: relative; overflow: hidden; }
.doc { position: absolute; left: 528px; top: 63px; width: 360px; height: 800px; background: #eee; box-shadow: 2px 4px 8px rgba(0, 0, 0, .35); color: #333; font-family: "Noto Sans CJK SC", sans-serif; }
.dstatus { height: 32px; padding: 7px 0 0 21px; font-size: 9px; line-height: 18px; letter-spacing: 1.5px; color: #555; }
.dnav { height: 33px; display: flex; align-items: center; justify-content: space-between; padding: 0 14px 7px 10px; }
.dnav b { font-size: 11.8px; letter-spacing: 1.700px; font-weight: 500; margin-left: 5px; }
.dtabs { height: 39px; background: #fff; display: flex; font-size: 8.500px; letter-spacing: 1px; color: #888; border-bottom: 1px solid #ddd; }
.dtabs span { width: 120px; text-align: center; line-height: 34px; height: 39px; }
.dtabs .act { color: #3d9db8; border-bottom: 3px solid #4599bd; }
.dgap { height: 4px; background: #eeeef0; }
.dbody { background: #fff; height: 508px; padding: 5px 2px 0; }
h4 { margin: 0; font-size: 10.300px; line-height: 16px; font-weight: 700; text-align: right; padding-right: 116px; color: #111; height: 21px; }
.form { display: grid; grid-template-columns: 88.500px 88.500px 88.500px 88.500px; grid-template-rows: 14px 14.500px 14.500px 15px 15px 15.500px 14.500px 20.500px 48px 22px 22px 22px; border: 1px solid #333; width: 356px; height: 239.500px; font-size: 6px; color: #333; }
.form > span { border-right: 1px solid #777; border-bottom: 1px solid #666; display: flex; align-items: center; justify-content: center; line-height: 9px; min-width: 0; }
.form > span:nth-last-child(-n+2) { border-bottom: 0; }
.form .x3 { grid-column: span 3; border-right: 0; }
.form > .l { justify-content: flex-start; padding-left: 1.500px; }
.form > .p4 { padding-left: 4px; }
.form > .tiny { overflow: hidden; font-size: 5px; gap: 32px; }
.form .two { text-align: center; }
.form > .dates { justify-content: flex-start; padding-left: 49px; }
.dates em { margin-right: 32px; font-size: 6.100px; }
.form > .sign { flex-direction: column; align-items: flex-start; padding: 0 0 10px 9px; }
.sign em { line-height: 10.500px; display: flex; }
.sign s { width: 10px; } .sign u { width: 17px; }
.dfoot { height: 27px; background: #e7e7e7; border-top: 2px solid #d6d6d6; }
.homebar { width: 128px; height: 4px; border-radius: 2px; background: #333; margin: 149px auto 0; }
.smudge { position: absolute; left: 0; top: 0; }
.note { position: absolute; left: 970px; top: 590px; overflow: visible; }
.red, .alt { font: 500 24px "Noto Sans CJK SC", sans-serif; fill: #fb1408; stroke: #fff; stroke-width: 2px; paint-order: stroke; }
.alt { font: 700 25px "Liberation Sans", sans-serif; }
.vscroll { width: 20px; background: #4a4a4a; border-right: 1px solid #404040; height: 947px; }
.vscroll i { width: 14px; height: 348px; background: #6a6a6a; margin: 274px 0 272px 3px; }
.status { flex: 1; display: flex; }
.zoomv { width: 60px; background: #434343; border-right: 1px solid #3c3c3c; text-align: center; font-size: 13px; line-height: 19px; padding-right: 2px; }
.dims { width: 230px; background: #535353; display: flex; align-items: center; padding-left: 9px; font-size: 14px; border-right: 1px solid #404040; }
.dims em { width: 208px; line-height: 18px; height: 20px; }
.hscroll { flex: 1; background: #4a4a4a; display: flex; align-items: center; padding-left: 10px; border-right: 1px solid #404040; }
.hscroll i { width: 531px; height: 14px; background: #6a6a6a; margin: 0 292px 2px 292px; flex: none; }

.strip { width: 53px; flex: none; border-left: 3px solid #414141; border-right: 3px solid #414141; display: flex; flex-direction: column; }
.shead, .phead { height: 15px; background: #424242; border-bottom: 1px solid #383838; display: flex; justify-content: flex-end; padding: 4px 7px 0 0; flex: none; }
.sbox { border-bottom: 1px solid #3c3c3c; }
.sbox svg { margin-left: 13px; }
.strip .grip { width: 24px; height: 5px; margin: 4px 0 0 11px; }
.b1 { height: 86px; }
.b1 svg:nth-child(2) { margin-top: 9px; }
.b1 svg:nth-child(3) { margin-top: 13px; }
.b2 { height: 87px; border-bottom-width: 2px; }
.b2 .grip { margin-top: 5px; }
.b2 svg { margin-top: 8px; }
.b2 svg:nth-child(3) { margin-top: 13px; margin-left: 14px; }

.panels { width: 359px; flex: none; border-right: 1px solid #3e3e3e; display: flex; flex-direction: column; }
.panel { flex: none; overflow: hidden; }
.ptabs { height: 36px; background: #424242; border-bottom: 1px solid #393939; display: flex; position: relative; }
.ptabs b { width: 49px; height: 35px; border-right: 1px solid #383838; font-weight: 400; text-align: center; line-height: 31px; font-size: 14.2px; color: #a6a6a6; }
.ptabs b.w49 { width: 50px; padding-left: 1px; }
.ptabs b.w45 { width: 46px; padding-right: 8px; }
.ptabs b.on { width: 50px; background: #535353; color: #f4f4f4; height: 36px; font-weight: 500; padding-left: 1px; }
.burger { margin: 13px 6px 0 auto; width: 10px; height: 8px; background: repeating-linear-gradient(#bbb 0 1px, transparent 1px 2.330px); }
.pcolor { height: 328px; }
.cbody { display: flex; }
.csw { width: 56px; position: relative; }
.csw .fg { left: 12px; top: 11px; width: 25px; height: 26px; outline: 2px solid #8a8a8a; }
.csw .bg { left: 24px; top: 24px; width: 24px; height: 24px; }
.field { width: 237px; height: 257px; margin-top: 7px; background: linear-gradient(to top, #000, transparent), linear-gradient(to right, #fff, #0096ff); overflow: hidden; position: relative; }
.field i { position: absolute; left: -1px; top: 2px; width: 14px; height: 14px; border: 1.300px solid #000; border-radius: 50%; }
.cbody > svg { margin: 109px 1px 0 9px; }
.hue { width: 24px; height: 257px; margin-top: 7px; background: linear-gradient(#f00, #f0f 16.670%, #00f 33.330%, #0ff 50%, #0f0 66.670%, #ff0 83.330%, #f00); }
.pprops, .players { border-top: 3px solid #3b3b3b; }
.pprops { height: 331px; }
.pprops .ptabs { height: 35px; }
.pprops .ptabs b { height: 34px; } .pprops .ptabs b.on { height: 35px; }
.docrow { height: 42px; border-bottom: 1px solid #404040; display: flex; padding: 7px 0 0 12.5px; line-height: 26px; font-size: 14.3px; }
.docrow span { width: 29px; height: 29px; background: #363636; border: 1px solid #646464; border-radius: 3px; margin-right: 7px; display: flex; align-items: center; justify-content: center; }
.pbody { display: flex; height: 219px; }
.pcontent { width: 338px; }
.sec { display: flex; align-items: center; padding: 4px 0 0 8px; height: 30px; }
.sec b { font-size: 15px; margin-left: 7px; line-height: 20px; color: #fff; }
.sizes { display: flex; padding: 14px 0 0 22px; align-items: center; }
.grid { display: grid; grid-template-columns: 51px 70px 36px 70px; row-gap: 10px; }
.grid label { text-align: right; padding-right: 8px; line-height: 25px; color: #c8c8c8; }
.inp { height: 26px; border: 1px solid #6c6c6c; background: #454545; line-height: 22px; padding-left: 3px; font-size: 13.300px; color: #fff; letter-spacing: -0.1px; }
.inp.off { background: #505050; border-color: #606060; color: #747474; padding-left: 4px; }
.orient { display: flex; align-items: center; padding: 15px 0 0 85px; }
.orient span { width: 31px; height: 31px; background: #363636; border: 1px solid #646464; border-radius: 3px; margin-right: 7px; display: flex; align-items: center; justify-content: center; }
.res { padding: 11px 0 0 85px; line-height: 19px; font-size: 14.300px; letter-spacing: .55px; color: #d4d4d4; height: 31px; }
.mode { display: flex; padding: 13px 0 0 47px; line-height: 21px; color: #d4d4d4; }
.mode > span:first-child { margin-top: -2px; }
.msel { width: 174px; height: 26px; background: #454545; border: 1px solid #666; border-radius: 3px; margin-left: 13px; display: flex; justify-content: space-between; padding: 0 4px 0 9px; color: #fff; }
.msel .chev { margin-top: 11px; }
.pscroll { width: 20px; background: #4a4a4a; display: flex; flex-direction: column; align-items: center; padding-top: 11px; padding-left: 1px; }
.pscroll i { width: 14px; height: 63px; background: #6a6a6a; border-radius: 2px; margin: 5px 2px 118px 0; }
.players { height: 329px; }
.lrow { display: flex; border-bottom: 1px solid #404040; color: #8e8e8e; }
.lsel { border: 1px solid #606060; border-radius: 3px; height: 26px; display: flex; align-items: center; justify-content: space-between; padding: 0 4px 3px 9px; margin-left: 4px; background: #4f4f4f; flex: none; }
.lsel .chev { margin-top: 6px; }
.r1 { height: 40px; padding-top: 10.5px; }
.lsel.k { width: 107px; justify-content: flex-start; gap: 5px; }
.lsel.k svg:first-child { margin-top: 3px; }
.lsel.k .chev { margin-left: auto; margin-top: 6px; }
.fi { margin: 4px 0 0 14px; }
.lsel + .fi { margin-left: 21px; }
.toggle { margin: 0 0 0 21px; width: 10px; height: 22px; background: #454545; border-radius: 5px; }
.toggle i { width: 10px; height: 10px; border-radius: 50%; background: #999; }
.r2 { height: 36px; padding-top: 7px; }
.lsel.m { width: 147px; }
.lt { flex: none; line-height: 20px; font-size: 14.300px; }
.lt.o { margin-left: 10px; width: 69px; margin-top: -1px; }
.pct { width: 68px; height: 23px; border: 1px solid #606060; border-radius: 3px; display: flex; flex: none; font-size: 12.800px; }
.pct b { font-weight: 400; width: 43px; background: #474747; height: 18px; margin: 1px 4px 0 1px; line-height: 18px; padding-left: 1px; color: #7c7c7c; }
.pct i { border-left: 1px solid #606060; flex: 1; padding: 9px 0 0 5px; }
.r3 { height: 39px; padding: 7px 0 0 8px; border: 0; }
.lt.l { width: 46px; }
.li { margin: 3px 11px 0 0; }
.li1 { margin-right: 9px; }
.li4 { margin-right: 8px; }
.lt.f { width: 42px; }
.llist { height: 143px; display: flex; border-bottom: 1px solid #404040; }
.lcol { width: 338px; background: #4b4b4b; }
.layer { display: flex; height: 51px; border-bottom: 1px solid #424242; background: #535353; }
.eye { width: 38px; border-right: 1px solid #444; padding: 21px 0 0 11px; }
.lname { flex: 1; background: #6a6a6a; display: flex; align-items: center; color: #fff; padding-left: 4px; }
.thumb { border: 1px solid #222; margin-right: 13px; width: 20px; height: 40px; }
.lnm { padding-bottom: 3px; }
.lk { margin-left: auto; margin-right: 20px; margin-top: 2px; }
.lscroll { flex: 1; background: #474747; }
.lfoot { position: relative; height: 31px; padding-left: 93px; }
.wm { position: absolute; left: 274px; top: 9px; font-size: 10.200px; line-height: 16px; color: #c4c4c4; text-shadow: 1px 1px 0 #333; font-family: "Liberation Sans", sans-serif; }
</style>
